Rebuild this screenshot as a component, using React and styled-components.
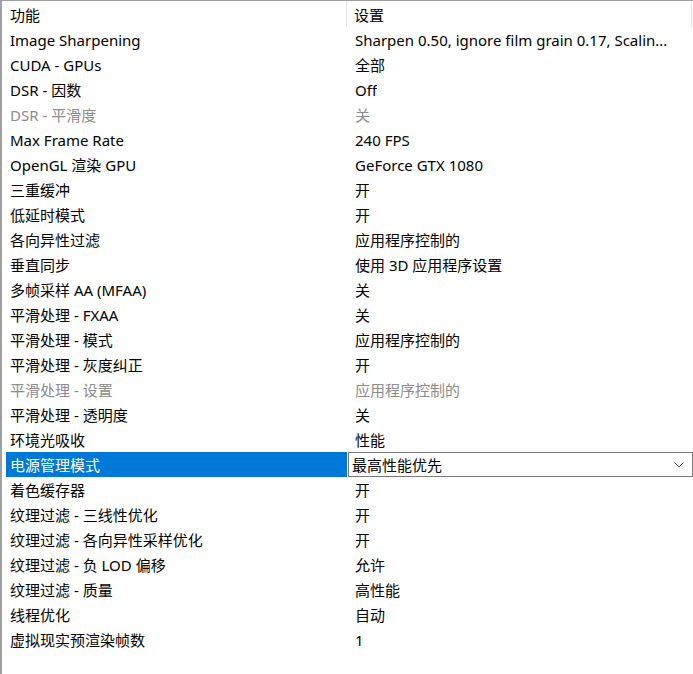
import React from "react";
import styled, { createGlobalStyle } from "styled-components";

const GlobalStyle = createGlobalStyle`
  html, body {
    margin: 0;
    padding: 0;
    background: #ffffff;
  }
  body {
    font-family: "Noto Sans", "Noto Sans CJK SC", sans-serif;
    font-size: 15px;
    color: #000000;
  }
`;

const St = {
  Frame: styled.div`
    width: 693px;
    height: 674px;
    box-sizing: border-box;
    border-top: 1px solid #a0a0a0;
    border-left: 2px solid #a0a0a0;
    overflow: hidden;
  `,
  Header: styled.div`
    display: grid;
    grid-template-columns: 345px 345px;
    height: 26px;
  `,
  HeaderCell: styled.div`
    display: flex;
    align-items: center;
    padding-left: ${({ pad }) => pad || "8px"};
    border-right: 1px solid #e5e5e5;
    margin: 1px 0 0;
  `,
  Row: styled.div`
    display: grid;
    grid-template-columns: 345px 346px;
    height: 25px;
    align-items: stretch;
  `,
  NameCell: styled.div`
    display: flex;
    align-items: center;
    padding-left: ${({ selected }) => (selected ? "4px" : "8px")};
    margin-left: ${({ selected }) => (selected ? "4px" : "0")};
    background: ${({ selected }) => (selected ? "#0078d7" : "transparent")};
    color: ${({ selected, disabled }) =>
      selected ? "#ffffff" : disabled ? "#8c8c8c" : "#000000"};
    white-space: nowrap;
  `,
  ValueCell: styled.div`
    display: flex;
    align-items: center;
    padding-left: 8px;
    padding-right: 10px;
    min-width: 0;
    color: ${({ disabled }) => (disabled ? "#8c8c8c" : "#000000")};
  `,
  ValueText: styled.span`
    white-space: nowrap;
    overflow: hidden;
    text-overflow: ellipsis;
  `,
  Select: styled.div`
    display: flex;
    align-items: center;
    justify-content: space-between;
    box-sizing: border-box;
    margin-left: 1px;
    border: 1px solid #7a7a7a;
    padding: 0 8px 0 3px;
    background: #ffffff;
  `,
};

const Chevron = () => (
  <svg width="10" height="6" viewBox="0 0 10 6">
    <path d="M0.5 0.5 L5 5 L9.5 0.5" fill="none" stroke="#555" strokeWidth="1" />
  </svg>
);

const rows = [
  ["Image Sharpening", "Sharpen 0.50, ignore film grain 0.17, Scalin..."],
  ["CUDA - GPUs", "全部"],
  ["DSR - 因数", "Off"],
  ["DSR - 平滑度", "关", true],
  ["Max Frame Rate", "240 FPS"],
  ["OpenGL 渲染 GPU", "GeForce GTX 1080"],
  ["三重缓冲", "开"],
  ["低延时模式", "开"],
  ["各向异性过滤", "应用程序控制的"],
  ["垂直同步", "使用 3D 应用程序设置"],
  ["多帧采样 AA (MFAA)", "关"],
  ["平滑处理 - FXAA", "关"],
  ["平滑处理 - 模式", "应用程序控制的"],
  ["平滑处理 - 灰度纠正", "开"],
  ["平滑处理 - 设置", "应用程序控制的", true],
  ["平滑处理 - 透明度", "关"],
  ["环境光吸收", "性能"],
  ["电源管理模式", "最高性能优先", false, true],
  ["着色缓存器", "开"],
  ["纹理过滤 - 三线性优化", "开"],
  ["纹理过滤 - 各向异性采样优化", "开"],
  ["纹理过滤 - 负 LOD 偏移", "允许"],
  ["纹理过滤 - 质量", "高性能"],
  ["线程优化", "自动"],
  ["虚拟现实预渲染帧数", "1"],
];

const App = () => (
  <>
    <GlobalStyle />
    <St.Frame>
      <St.Header>
        <St.HeaderCell>功能</St.HeaderCell>
        <St.HeaderCell pad="7px">设置</St.HeaderCell>
      </St.Header>
      {rows.map(([name, value, disabled, selected]) => (
        <St.Row key={name}>
          <St.NameCell selected={selected} disabled={disabled}>
            {name}
          </St.NameCell>
          {selected ? (
            <St.Select>
              <span>{value}</span>
              <Chevron />
            </St.Select>
          ) : (
            <St.ValueCell disabled={disabled}>
              <St.ValueText>{value}</St.ValueText>
            </St.ValueCell>
          )}
        </St.Row>
      ))}
    </St.Frame>
  </>
);

export default App;
